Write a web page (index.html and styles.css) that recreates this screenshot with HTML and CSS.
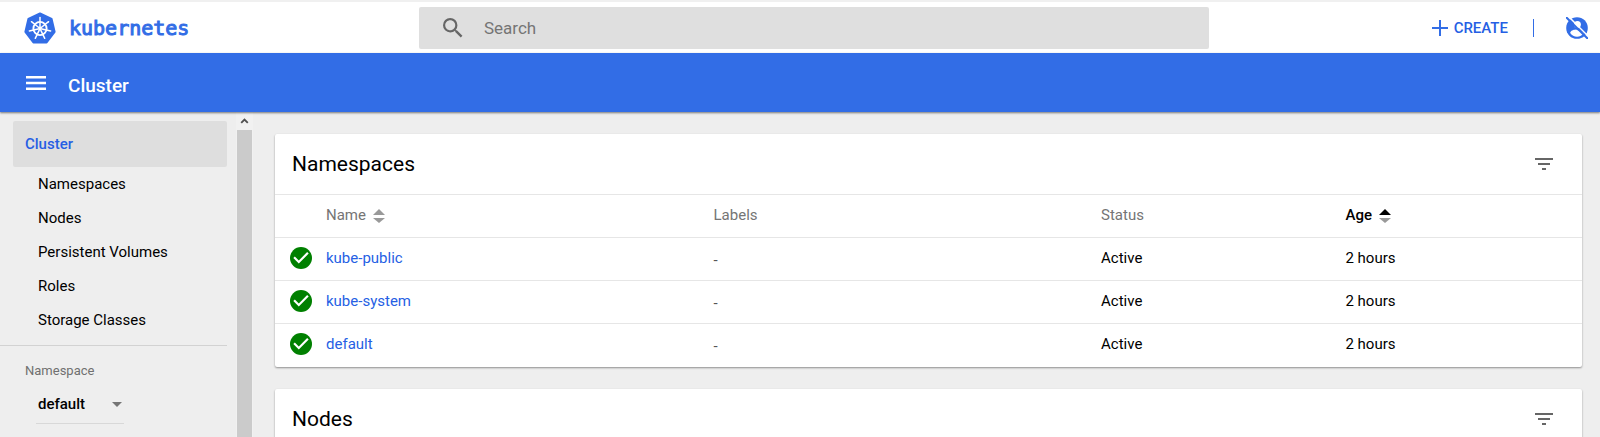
FILE: index.html
```html
<!DOCTYPE html>
<html lang="en">

<head>
    <title>Kubernetes Dashboard</title>
    <meta charset="utf-8" />
    <meta name="viewport" content="width=device-width,initial-scale=1" />
    <link rel="stylesheet" href="styles.css">
</head>

<body>

    <!-- shared icons -->
    <svg class="sprite" aria-hidden="true">
        <symbol id="check" viewBox="2 2 20 20">
            <path fill="#008000" d="M12 2a10 10 0 1 0 0 20 10 10 0 0 0 0-20z" />
            <path fill="#fff" d="M10 17l-5-5 1.4-1.4 3.6 3.6 7.6-7.6L19 8z" />
        </symbol>
        <symbol id="filter" viewBox="0 0 24 24">
            <path d="M10 18h4v-2h-4v2zM3 6v2h18V6H3zm3 7h12v-2H6v2z" />
        </symbol>
        <symbol id="sort" viewBox="0 0 12 16">
            <path d="M6 1l6 6H0z" />
            <path fill="#999" d="M6 15l6-5H0z" />
        </symbol>
    </svg>

    <header class="topbar">
        <a class="brand" href="#">
            <svg class="logo" viewBox="0 0 32 32" aria-hidden="true">
                <path fill="#326de6" stroke="#326de6" stroke-width="2" stroke-linejoin="round" d="M16 1.5L27.6 7 30.6 19.8 22.6 30.5H9.4L1.4 19.8 4.4 7z" />
                <g fill="none" stroke="#fff">
                    <circle cx="16" cy="16.5" r="6.6" stroke-width="1.9" />
                    <g stroke-width="1.5" stroke-linecap="round">
                        <path d="M16 14.5V5.6" />
                        <path d="M16 14.5V5.6" transform="rotate(51.43 16 16.5)" />
                        <path d="M16 14.5V5.6" transform="rotate(102.86 16 16.5)" />
                        <path d="M16 14.5V5.6" transform="rotate(154.29 16 16.5)" />
                        <path d="M16 14.5V5.6" transform="rotate(205.71 16 16.5)" />
                        <path d="M16 14.5V5.6" transform="rotate(257.14 16 16.5)" />
                        <path d="M16 14.5V5.6" transform="rotate(308.57 16 16.5)" />
                    </g>
                </g>
                <circle cx="16" cy="16.5" r="1.9" fill="#fff" />
            </svg>
            <span>kubernetes</span>
        </a>
        <form class="search">
            <label for="search" aria-label="Search">
                <svg viewBox="3 3 18 18" aria-hidden="true">
                    <path d="M15.5 14h-.79l-.28-.27A6.47 6.47 0 0 0 16 9.5 6.5 6.5 0 1 0 9.5 16c1.61 0 3.09-.59 4.23-1.57l.27.28v.79l5 4.99L20.49 19l-4.99-5zm-6 0C7.01 14 5 11.99 5 9.5S7.01 5 9.5 5 14 7.01 14 9.5 11.99 14 9.5 14z" />
                </svg>
            </label>
            <input type="text" id="search" placeholder="Search" />
        </form>
        <div class="actions">
            <button class="create" type="button">
                <svg viewBox="0 0 16 16" aria-hidden="true">
                    <path d="M7 0h2v7h7v2H9v7H7V9H0V7h7z" />
                </svg>
                CREATE
            </button>
            <span class="separator"></span>
            <button class="user" type="button" aria-label="User">
                <svg viewBox="0 0 22 22" aria-hidden="true">
                    <circle cx="11" cy="11" r="10.8" fill="#326de6" />
                    <circle cx="11.4" cy="7.4" r="3.5" fill="#fff" />
                    <path fill="#fff" d="M10 12.5c-3 .2-5.800 1.600-5.800 3.500a8 8 0 0 0 13.600 0z" />
                    <path stroke="#fff" stroke-width="1.500" d="M1.700-1.300l22 22" />
                    <path stroke="#326de6" stroke-width="2" d="M0 0l22 22" />
                </svg>
            </button>
        </div>
    </header>

    <div class="toolbar">
        <button type="button" aria-label="Menu">
            <svg viewBox="0 0 20 14" aria-hidden="true">
                <path d="M0 0h20v2.400H0zM0 5.800h20v2.400H0zM0 11.600h20v2.400H0z" />
            </svg>
        </button>
        <h1>Cluster</h1>
    </div>

    <div class="content">
        <nav class="sidebar">
            <a class="active" href="#">Cluster</a>
            <ul>
                <li><a href="#">Namespaces</a></li>
                <li><a href="#">Nodes</a></li>
                <li><a href="#">Persistent Volumes</a></li>
                <li><a href="#">Roles</a></li>
                <li><a href="#">Storage Classes</a></li>
            </ul>
            <div class="namespace">
                <label for="namespace">Namespace</label>
                <div class="select">
                    <select id="namespace">
                        <option>default</option>
                    </select>
                    <svg viewBox="0 0 10 5" aria-hidden="true">
                        <path d="M0 0h10L5 5z" />
                    </svg>
                </div>
            </div>
        </nav>

        <div class="scrollbar">
            <svg viewBox="0 0 16 18" aria-hidden="true">
                <path d="M4.500 11L8 7.500l3.500 3.500" />
            </svg>
            <div class="thumb"></div>
        </div>

        <main>
            <section class="card">
                <div class="cardHeader">
                    <h2>Namespaces</h2>
                    <button type="button" aria-label="Filter namespaces"><svg><use href="#filter" /></svg></button>
                </div>
                <table>
                    <thead>
                        <tr>
                            <th class="icon"></th>
                            <th class="name">Name <svg class="sort"><use href="#sort" /></svg></th>
                            <th class="labels">Labels</th>
                            <th class="status">Status</th>
                            <th class="age">Age <svg class="sort"><use href="#sort" /></svg></th>
                        </tr>
                    </thead>
                    <tbody>
                        <tr>
                            <td class="icon"><svg><use href="#check" /></svg></td>
                            <td><a href="#">kube-public</a></td>
                            <td class="empty">-</td>
                            <td>Active</td>
                            <td>2 hours</td>
                        </tr>
                        <tr>
                            <td class="icon"><svg><use href="#check" /></svg></td>
                            <td><a href="#">kube-system</a></td>
                            <td class="empty">-</td>
                            <td>Active</td>
                            <td>2 hours</td>
                        </tr>
                        <tr>
                            <td class="icon"><svg><use href="#check" /></svg></td>
                            <td><a href="#">default</a></td>
                            <td class="empty">-</td>
                            <td>Active</td>
                            <td>2 hours</td>
                        </tr>
                    </tbody>
                </table>
            </section>

            <section class="card">
                <div class="cardHeader">
                    <h2>Nodes</h2>
                    <button type="button" aria-label="Filter nodes"><svg><use href="#filter" /></svg></button>
                </div>
            </section>
        </main>
    </div>

</body>

</html>
```
FILE: styles.css
```css
* {
    box-sizing: border-box;
}

body {
    margin: 0;
    height: 100vh;
    display: flex;
    flex-direction: column;
    overflow: hidden;
    background-color: #eee;
    color: #000;
    font-family: Roboto, sans-serif;
    font-size: 15px;
    line-height: 20px;
}

a {
    color: #265fe4;
    text-decoration: none;
}

button {
    display: flex;
    align-items: center;
    padding: 0;
    border: none;
    background: none;
    font: inherit;
    cursor: pointer;
}

h1,
h2 {
    margin: 0;
}

.sprite {
    display: none;
}

/* top bar */

.topbar {
    flex: none;
    display: flex;
    align-items: center;
    height: 53px;
    padding: 0 12px 0 24px;
    border-top: 2px solid #f0f0f0;
    background-color: #fff;
}

.brand {
    flex: none;
    display: flex;
    align-items: center;
    gap: 13px;
    width: 395px;
    color: #326de6;
    font-family: "DejaVu Sans Mono", monospace;
    font-size: 20px;
    -webkit-text-stroke: 1px #326de6;
}

.logo {
    width: 32px;
    height: 32px;
}

.search {
    flex: 1;
    display: flex;
    align-items: center;
    height: 42px;
    padding-left: 24px;
    border-radius: 2px;
    background-color: #dfdfdf;
}

.search label,
.search svg {
    display: block;
    width: 20px;
    height: 20px;
    fill: #666;
}

.search input {
    flex: 1;
    height: 42px;
    padding: 0 21px;
    border: none;
    outline: none;
    background: none;
    font: inherit;
    font-size: 17px;
}

.search input::placeholder {
    color: #757575;
}

.actions {
    flex: none;
    display: flex;
    align-items: center;
    justify-content: flex-end;
    width: 379px;
}

.create {
    gap: 6px;
    color: #265fe4;
    font-weight: 500;
}

.create svg {
    width: 16px;
    height: 16px;
    fill: #326de6;
}

.separator {
    width: 1px;
    height: 18px;
    margin: 0 32px 0 25px;
    background-color: #326de6;
}

.user svg {
    width: 22px;
    height: 22px;
}

/* blue bar */

.toolbar {
    flex: none;
    display: flex;
    align-items: center;
    gap: 22px;
    height: 59px;
    padding-left: 26px;
    background-color: #326de6;
    box-shadow: 0 1px 2px rgba(0, 0, 0, 0.5);
    color: #fff;
    z-index: 1;
}

.toolbar svg {
    width: 20px;
    height: 14px;
    fill: #fff;
}

.toolbar h1 {
    padding-top: 6px;
    font-size: 19px;
    font-weight: 500;
}

.content {
    flex: 1;
    display: flex;
    min-height: 0;
}

/* sidebar */

.sidebar {
    flex: none;
    width: 236px;
    padding: 9px 9px 0 0;
}

.sidebar .active {
    display: block;
    margin-left: 13px;
    padding: 13px 12px;
    border-radius: 2px;
    background-color: #dedede;
    font-weight: 500;
}

.sidebar ul {
    margin: 0;
    padding: 0 0 8px 38px;
    border-bottom: 1px solid #d2d2d2;
    list-style: none;
}

.sidebar li a {
    display: block;
    padding: 7px 0;
    color: #000;
}

.namespace {
    padding: 15px 0 0 25px;
    color: #707070;
    font-size: 13px;
}

.select {
    display: flex;
    align-items: center;
    width: 88px;
    height: 39px;
    margin: 4px 0 0 11px;
    padding-right: 2px;
    border-bottom: 1px solid #d8d8d8;
}

.select select {
    flex: 1;
    padding: 0 2px;
    border: none;
    outline: none;
    background: none;
    appearance: none;
    color: #000;
    font: 500 15px/20px Roboto, sans-serif;
}

.select svg {
    width: 10px;
    height: 5px;
    fill: #757575;
}

.scrollbar {
    flex: none;
    display: flex;
    flex-direction: column;
    width: 17px;
    padding: 0 1px;
    background-color: #f1f1f1;
}

.scrollbar svg {
    width: 15px;
    height: 18px;
    fill: none;
    stroke: #505050;
    stroke-width: 2;
}

.thumb {
    flex: 1;
    background-color: #cbcbcb;
}

/* cards */

main {
    flex: 1;
    padding: 22px 18px 0 22px;
}

.card {
    margin-bottom: 22px;
    border-radius: 2px;
    background-color: #fff;
    box-shadow: 0 1px 2px rgba(0, 0, 0, 0.4);
}

.cardHeader {
    display: flex;
    align-items: center;
    justify-content: space-between;
    height: 60px;
    padding: 0 26px 0 17px;
}

.cardHeader h2 {
    font-size: 21px;
    font-weight: 400;
}

.cardHeader svg {
    width: 24px;
    height: 24px;
    fill: #666;
}

table {
    width: 100%;
    border-collapse: collapse;
    table-layout: fixed;
}

th,
td {
    height: 43px;
    padding: 0 0 2px;
    border-top: 1px solid #e6e6e6;
    text-align: left;
}

th {
    color: #757575;
    font-weight: 400;
}

.icon {
    width: 51px;
    padding-left: 15px;
}

.icon svg {
    display: block;
    width: 22px;
    height: 22px;
}

.name,
.labels {
    width: 29.65%;
}

.status {
    width: 18.7%;
}

.sort {
    width: 12px;
    height: 16px;
    margin-left: 3px;
    fill: #999;
    vertical-align: middle;
}

.age {
    color: #000;
    font-weight: 500;
}

.age .sort {
    fill: #000;
}

.empty {
    padding-top: 4px;
    color: #555;
}
```
